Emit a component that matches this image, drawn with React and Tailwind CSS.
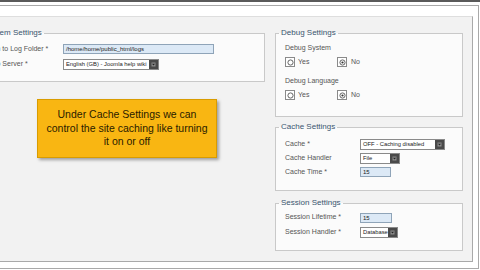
import React from 'react';

function Fieldset({ legend, legendMl = 'ml-[3px]', className = '', children }) {
  return (
    <fieldset className={`border border-[#c9c9c9] bg-[#fbfbfb] p-0 ${className}`}>
      <legend className={`${legendMl} px-[2px] text-[8px] leading-[10px] text-[#3a5670]`}>{legend}</legend>
      {children}
    </fieldset>
  );
}

function TextInput({ value, w }) {
  return (
    <div className={`${w} h-[10px] border border-[#8fa4b8] bg-[#dce9f6] px-[2px] text-[6px] leading-[8px] text-[#222] overflow-hidden whitespace-nowrap`}>
      {value}
    </div>
  );
}

function Select({ value, w }) {
  return (
    <div className={`${w} h-[11px] flex border border-[#8a8a8a] bg-white`}>
      <div className="flex-1 pl-[2px] text-[5.8px] leading-[9px] text-[#222] overflow-hidden whitespace-nowrap">{value}</div>
      <div className="w-[9px] h-full bg-[#4a4a4a] flex items-center justify-center">
        <svg width="5" height="5" viewBox="0 0 5 5">
          <rect x="0.5" y="0.5" width="4" height="4" fill="#8c8c8c" />
          <path d="M1 1.8 L4 1.8 L2.5 3.6 Z" fill="#222" />
        </svg>
      </div>
    </div>
  );
}

function Radio({ checked }) {
  return (
    <div className="w-[10px] h-[10px] border border-[#8a8a8a] bg-white flex items-center justify-center">
      <svg width="7" height="7" viewBox="0 0 7 7">
        <circle cx="3.5" cy="3.5" r="2.6" fill="none" stroke="#555" strokeWidth="0.9" />
        {checked && <circle cx="3.5" cy="3.5" r="1.1" fill="#333" />}
      </svg>
    </div>
  );
}

function RadioRow({ className = '' }) {
  return (
    <div className={`flex items-center h-[10px] text-[7px] text-[#555] ${className}`}>
      <div className="flex items-center gap-[3px] w-[52px]">
        <Radio />
        <span>Yes</span>
      </div>
      <div className="flex items-center gap-[4px]">
        <Radio checked />
        <span>No</span>
      </div>
    </div>
  );
}

function Row({ label, children, h = 'h-[14px]' }) {
  return (
    <div className={`flex items-center ${h}`}>
      <div className="w-[75px] text-[7px] text-[#555] whitespace-nowrap">{label}</div>
      {children}
    </div>
  );
}

export default function App() {
  return (
    <div className="w-[480px] h-[270px] overflow-hidden bg-white font-['Liberation_Sans',Arial,sans-serif]">
      <div className="h-[2px] bg-[#5a5a5a]" />
      <div className="mt-[3px] ml-[-40px] w-[519px] h-[264px] border border-[#a9a9a9] bg-white">
        <div className="mt-[10px] mr-[5px] h-[246px] border-t border-r border-b border-t-[#dedede] border-r-[#a9a9a9] border-b-[#a9a9a9] bg-[#f2f2f2] flex gap-[10px]">
          {/* left column, clipped at the page edge */}
          <div className="w-[304px] pt-[11px]">
            <Fieldset legend="System Settings" legendMl="ml-[20px]" className="h-[54px]">
              <div className="pl-[24px]">
                <div className="mt-[5px] flex items-center h-[12px]">
                  <div className="w-[77px] text-[7px] text-[#555] whitespace-nowrap">Path to Log Folder *</div>
                  <TextInput value="/home/home/public_html/logs" w="w-[151px]" />
                </div>
                <div className="mt-[3px] flex items-center h-[12px]">
                  <div className="w-[77px] text-[7px] text-[#555] whitespace-nowrap">Help Server *</div>
                  <Select value="English (GB) - Joomla help wiki" w="w-[96px]" />
                </div>
              </div>
            </Fieldset>
            <div className="mt-[17px] ml-[76px] w-[180px] h-[59px] bg-[#f9b612] border border-[#d99c00] shadow-[2px_2px_3px_rgba(0,0,0,0.35)] flex items-center justify-center px-[6px]">
              <p className="text-center text-[10.5px] leading-[13.5px] text-[#2a2000]">
                Under Cache Settings we can control the site caching like turning it on or off
              </p>
            </div>
          </div>

          {/* right column */}
          <div className="w-[188px] pt-[11px] flex flex-col">
            <Fieldset legend="Debug Settings" className="h-[89px]">
              <div className="pl-[9px] flex flex-col">
                <div className="mt-[5px] h-[10px] flex items-center text-[7px] text-[#555]">Debug System</div>
                <RadioRow className="mt-[4px]" />
                <div className="mt-[9px] h-[10px] flex items-center text-[7px] text-[#555]">Debug Language</div>
                <RadioRow className="mt-[4px]" />
              </div>
            </Fieldset>

            <Fieldset legend="Cache Settings" className="mt-[5px] h-[69px]">
              <div className="pl-[9px] pt-[5px] flex flex-col">
                <Row label="Cache *">
                  <Select value="OFF - Caching disabled" w="w-[85px]" />
                </Row>
                <Row label="Cache Handler">
                  <Select value="File" w="w-[40px]" />
                </Row>
                <Row label="Cache Time *">
                  <TextInput value="15" w="w-[31px]" />
                </Row>
              </div>
            </Fieldset>

            <Fieldset legend="Session Settings" className="mt-[7px] h-[53px]">
              <div className="pl-[9px] pt-[2px] flex flex-col">
                <Row label="Session Lifetime *" h="h-[15px]">
                  <TextInput value="15" w="w-[32px]" />
                </Row>
                <Row label="Session Handler *" h="h-[15px]">
                  <Select value="Database" w="w-[38px]" />
                </Row>
              </div>
            </Fieldset>
          </div>
        </div>
      </div>
    </div>
  );
}
